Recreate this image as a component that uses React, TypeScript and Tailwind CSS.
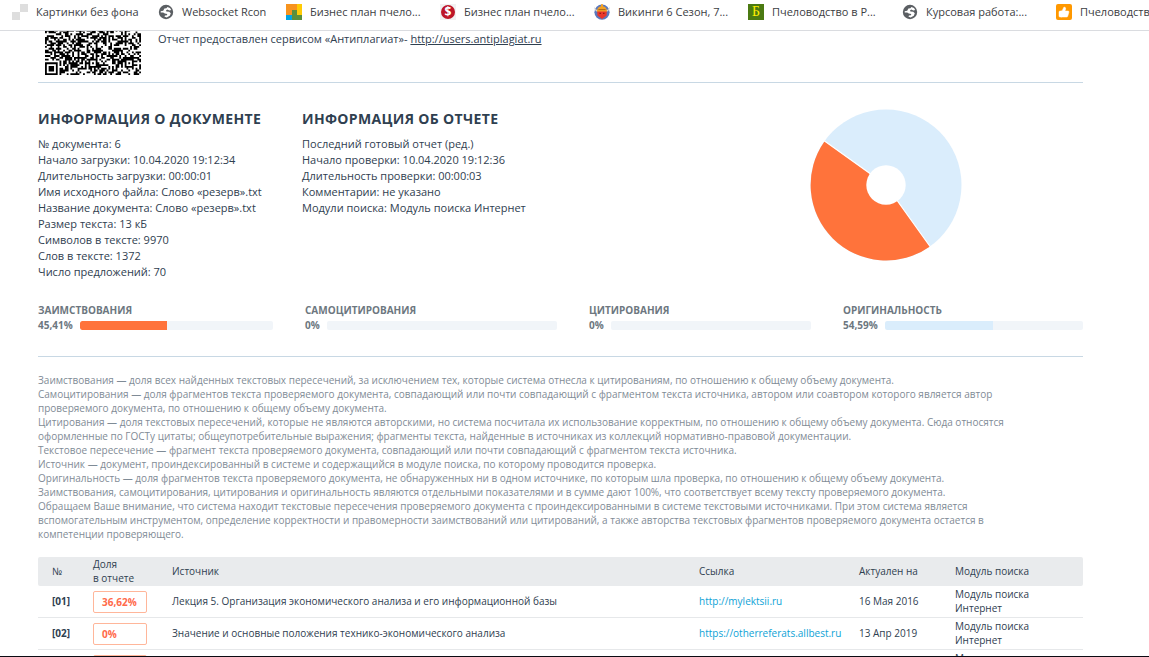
import type { ReactNode } from "react";
import { ThumbsUp } from "lucide-react";

const QR_SIZE = 53;

function GlobeIcon() {
  return (
    <svg viewBox="0 0 16 16" className="size-4" aria-hidden="true">
      <circle cx="8" cy="8" r="7.2" fill="#5b5f63" />
      <path
        d="M9.4 2.9 12 3.9 13.2 6 11.4 6.4 9.2 5.6 8 6.4 8.4 7.4 11.2 7.8 12.8 9.2 11.8 11.8 8.6 13.4 6.4 12.6 7 11.4 9 11.2 9.2 10 6.8 9.4 5.2 8.4 2.7 8.6 2.7 7.2 5.2 6.8 6.4 4.6 8.4 4.2Z"
        fill="#fff"
      />
    </svg>
  );
}

function CheckerIcon() {
  return (
    <svg viewBox="0 0 16 16" className="size-4" aria-hidden="true">
      <path d="M8 0h8v8H8zM0 8h8v8H0z" fill="#dedede" />
    </svg>
  );
}

function BlocksIcon() {
  return (
    <svg viewBox="0 0 16 16" className="size-4" aria-hidden="true">
      <path d="M0 0h11v6H6v5H0z" fill="#f7931e" />
      <path d="M11 0h5v11h-5z" fill="#ffcb05" />
      <path d="M0 11h6v5H0z" fill="#00a4e4" />
      <path d="M6 6h5v5h5v5H6z" fill="#5a8f3c" />
    </svg>
  );
}

function DollarIcon() {
  return (
    <span className="flex size-4 items-center justify-center bg-[#f1f1f1]">
      <span className="flex size-[14px] items-center justify-center rounded-full bg-[#bd1527] text-[12px] leading-none font-bold text-white">
        $
      </span>
    </span>
  );
}

function VikingIcon() {
  return (
    <svg viewBox="0 0 16 16" className="size-4" aria-hidden="true">
      <circle cx="8" cy="8.2" r="7.6" fill="#5a78bd" />
      <path d="M.4 2.5C1 5 2 6 4 6L3.5 8C1 7 0 5 .4 2.5ZM15.6 2.5C15 5 14 6 12 6l.5 2C15 7 16 5 15.6 2.5Z" fill="#d8d3c8" />
      <path d="M3.2 7h9.6l-.2 4.6L8 15 3.4 11.6Z" fill="#e8372c" />
      <path d="M3 7.4C3.2 3.8 5 2.6 7 2.2V.2h2v2c2 .4 3.8 1.6 4 5.2Z" fill="#f2a125" />
      <path d="M4.4 5.6h7.2" stroke="#a8661a" strokeWidth="1" />
      <path d="M5.6 9.4h1.2M9.2 9.4h1.2" stroke="#7c1410" strokeWidth="1.2" />
    </svg>
  );
}

function LetterIcon() {
  return (
    <span className="flex size-4 items-center justify-center bg-[#4b7a12] font-['Liberation_Serif',serif] text-[14px] leading-none text-[#ffee00]">
      Б
    </span>
  );
}

function ThumbIcon() {
  return (
    <span className="flex size-4 items-center justify-center rounded-[2px] bg-[#ff9800]">
      <ThumbsUp className="size-3 text-white" fill="currentColor" strokeWidth={1} />
    </span>
  );
}

const bookmarks: { title: string; icon: ReactNode; width: string }[] = [
  { title: "Картинки без фона", icon: <CheckerIcon />, width: "w-[146px]" },
  { title: "Websocket Rcon", icon: <GlobeIcon />, width: "w-32" },
  { title: "Бизнес план пчело...", icon: <BlocksIcon />, width: "w-[154px]" },
  { title: "Бизнес план пчело...", icon: <DollarIcon />, width: "w-[154px]" },
  { title: "Викинги 6 Сезон, 7...", icon: <VikingIcon />, width: "w-[154px]" },
  { title: "Пчеловодство в Р...", icon: <LetterIcon />, width: "w-[154px]" },
  { title: "Курсовая работа:...", icon: <GlobeIcon />, width: "w-[154px]" },
  { title: "Пчеловодство", icon: <ThumbIcon />, width: "w-[154px]" },
];

const documentInfo = [
  "№ документа: 6",
  "Начало загрузки: 10.04.2020 19:12:34",
  "Длительность загрузки: 00:00:01",
  "Имя исходного файла: Слово «резерв».txt",
  "Название документа: Слово «резерв».txt",
  "Размер текста: 13 кБ",
  "Символов в тексте: 9970",
  "Слов в тексте: 1372",
  "Число предложений: 70",
];

const reportInfo = [
  "Последний готовый отчет (ред.)",
  "Начало проверки: 10.04.2020 19:12:36",
  "Длительность проверки: 00:00:03",
  "Комментарии: не указано",
  "Модули поиска: Модуль поиска Интернет",
];

const stats = [
  { label: "ЗАИМСТВОВАНИЯ", value: "45,41%", percent: 45.41, color: "bg-[#ff733b]" },
  { label: "САМОЦИТИРОВАНИЯ", value: "0%", percent: 0, color: "bg-[#ff733b]" },
  { label: "ЦИТИРОВАНИЯ", value: "0%", percent: 0, color: "bg-[#ff733b]" },
  { label: "ОРИГИНАЛЬНОСТЬ", value: "54,59%", percent: 54.59, color: "bg-[#daedfc]" },
];

const notes = [
  "Заимствования — доля всех найденных текстовых пересечений, за исключением тех, которые система отнесла к цитированиям, по отношению к общему объему документа.",
  "Самоцитирования — доля фрагментов текста проверяемого документа, совпадающий или почти совпадающий с фрагментом текста источника, автором или соавтором которого является автор\nпроверяемого документа, по отношению к общему объему документа.",
  "Цитирования — доля текстовых пересечений, которые не являются авторскими, но система посчитала их использование корректным, по отношению к общему объему документа. Сюда относятся\nоформленные по ГОСТу цитаты; общеупотребительные выражения; фрагменты текста, найденные в источниках из коллекций нормативно-правовой документации.",
  "Текстовое пересечение — фрагмент текста проверяемого документа, совпадающий или почти совпадающий с фрагментом текста источника.",
  "Источник — документ, проиндексированный в системе и содержащийся в модуле поиска, по которому проводится проверка.",
  "Оригинальность — доля фрагментов текста проверяемого документа, не обнаруженных ни в одном источнике, по которым шла проверка, по отношению к общему объему документа.",
  "Заимствования, самоцитирования, цитирования и оригинальность являются отдельными показателями и в сумме дают 100%, что соответствует всему тексту проверяемого документа.",
  "Обращаем Ваше внимание, что система находит текстовые пересечения проверяемого документа с проиндексированными в системе текстовыми источниками. При этом система является\nвспомогательным инструментом, определение корректности и правомерности заимствований или цитирований, а также авторства текстовых фрагментов проверяемого документа остается в\nкомпетенции проверяющего.",
];

const sources = [
  {
    id: "[01]",
    share: "36,62%",
    title: "Лекция 5. Организация экономического анализа и его информационной базы",
    url: "http://mylektsii.ru",
    date: "16 Мая 2016",
  },
  {
    id: "[02]",
    share: "0%",
    title: "Значение и основные положения технико-экономического анализа",
    url: "https://otherreferats.allbest.ru",
    date: "13 Апр 2019",
  },
  { id: "", share: "", title: "", url: "", date: "" },
];

function isDark(x: number, y: number) {
  // finder pattern in the bottom left corner
  if (x < 8 && y > 44) {
    if (x === 7 || y === 45) return false;
    const ring = Math.max(Math.abs(x - 3), Math.abs(y - 49));
    return ring !== 2;
  }
  for (const cx of [26, 46]) {
    const ring = Math.max(Math.abs(x - cx), Math.abs(y - 46));
    if (ring <= 2) return ring !== 1;
  }
  if (x === 6) return y % 2 === 0;
  const n = Math.sin(x * 12.9898 + y * 78.233) * 43758.5453;
  return n - Math.floor(n) > 0.48;
}

function QrCode() {
  let path = "";
  for (let y = 28; y < QR_SIZE; y++) {
    for (let x = 0; x < QR_SIZE; x++) {
      if (isDark(x, y)) path += `M${x} ${y}h1v1h-1z`;
    }
  }
  return (
    <svg viewBox="0 28.7 53 24.3" className="h-11 w-24" role="img" aria-label="QR">
      <path d={path} fill="#000" />
    </svg>
  );
}

function Donut() {
  return (
    <svg viewBox="0 0 152 152" className="size-[152px]" role="img" aria-label="45,41% / 54,59%">
      <circle cx="76" cy="76" r="75.5" fill="#daedfc" />
      <path d="M76 76 14.6 32.2A75.5 75.5 0 0 0 120 137.4Z" fill="#ff733b" />
      <path d="M14.2 31.8 76 76 120.4 138" fill="none" stroke="#fff" strokeWidth="1.2" />
      <circle cx="76" cy="76" r="19.7" fill="#fff" />
    </svg>
  );
}

function InfoBlock({ title, lines }: { title: string; lines: string[] }) {
  return (
    <section>
      <h2 className="text-[14px] leading-5 font-bold tracking-wide whitespace-nowrap">{title}</h2>
      <ul className="mt-[7px] text-[11px] leading-4 whitespace-nowrap">
        {lines.map((line) => (
          <li key={line}>{line}</li>
        ))}
      </ul>
    </section>
  );
}

export default function App() {
  return (
    <div className="flex h-screen flex-col overflow-hidden bg-white font-['Open_Sans',sans-serif] text-[#2f4050]">
      <nav className="flex h-[31px] shrink-0 overflow-hidden border-b border-[#dadce0] pt-1 pl-3 text-[11px] leading-4 text-[#3c4043]">
        {bookmarks.map((item, index) => (
          <a
            key={index}
            href="#"
            className={`flex h-4 shrink-0 items-center gap-2 whitespace-nowrap ${item.width}`}>
            {item.icon}
            {item.title}
          </a>
        ))}
      </nav>

      <main className="min-h-0 flex-1 overflow-hidden pr-[66px] pl-[38px]">
        <header className="flex h-[52px] gap-[17px] border-b border-[#c8d8e4] pl-[7px]">
          <QrCode />
          <p className="text-[11px] leading-4">
            Отчет предоставлен сервисом «Антиплагиат»-{" "}
            <a href="#" className="underline">
              http://users.antiplagiat.ru
            </a>
          </p>
        </header>

        <div className="flex pt-[26px]">
          <div className="w-[264px] shrink-0">
            <InfoBlock title="ИНФОРМАЦИЯ О ДОКУМЕНТЕ" lines={documentInfo} />
          </div>
          <div className="flex-1">
            <InfoBlock title="ИНФОРМАЦИЯ ОБ ОТЧЕТЕ" lines={reportInfo} />
          </div>
          <div className="mr-[121px]">
            <Donut />
          </div>
        </div>

        <div className="grid grid-cols-[235fr_252fr_222fr_240fr] gap-8 border-b border-[#c8d8e4] pt-[22px] pb-6 text-[10px] font-bold text-[#6d7780]">
          {stats.map((stat) => (
            <div key={stat.label}>
              <h3 className="leading-4">{stat.label}</h3>
              <div className="flex items-center gap-[7px] leading-[14px]">
                <span>{stat.value}</span>
                <div className="h-[9px] flex-1 overflow-hidden rounded-[2px] bg-[#f1f5f9]">
                  <div
                    className={`h-full rounded-l-[2px] ${stat.color}`}
                    style={{ width: `${stat.percent}%` }}
                  />
                </div>
              </div>
            </div>
          ))}
        </div>

        <div className="pt-4 text-[10px] leading-[14px] whitespace-pre-line text-[#7f8b96]">
          {notes.map((note) => (
            <p key={note}>{note}</p>
          ))}
        </div>

        <table className="mt-4 w-full table-fixed border-separate border-spacing-0 text-left text-[10px] leading-[14px]">
          <colgroup>
            <col className="w-[55px]" />
            <col className="w-[79px]" />
            <col />
            <col className="w-40" />
            <col className="w-24" />
            <col className="w-32" />
          </colgroup>
          <thead className="bg-[#e9ebed]">
            <tr className="h-[29px] *:pb-px *:font-normal">
              <th className="rounded-l-[2px] pl-[14px]">№</th>
              <th>
                Доля
                <br />в отчете
              </th>
              <th>Источник</th>
              <th>Ссылка</th>
              <th>Актуален на</th>
              <th className="rounded-r-[2px]">Модуль поиска</th>
            </tr>
          </thead>
          <tbody>
            {sources.map((source, index) => (
              <tr key={index} className="h-8 *:border-b *:border-[#e6e8ea]">
                <td className="pb-0.5 pl-[14px] font-bold">{source.id}</td>
                <td>
                  <span className="flex h-[22px] w-[54px] items-center rounded-[2px] border border-[#ffb69a] pl-2 font-bold text-[#ff6a4a]">
                    {source.share}
                  </span>
                </td>
                <td className="pb-0.5">{source.title}</td>
                <td className="pb-0.5">
                  <a href="#" className="text-[#0da2d6]">
                    {source.url}
                  </a>
                </td>
                <td className="pb-0.5">{source.date}</td>
                <td className="pb-0.5">
                  Модуль поиска
                  <br />
                  Интернет
                </td>
              </tr>
            ))}
          </tbody>
        </table>
      </main>
      <div className="h-px shrink-0 bg-[#0b0a12]" />
    </div>
  );
}
